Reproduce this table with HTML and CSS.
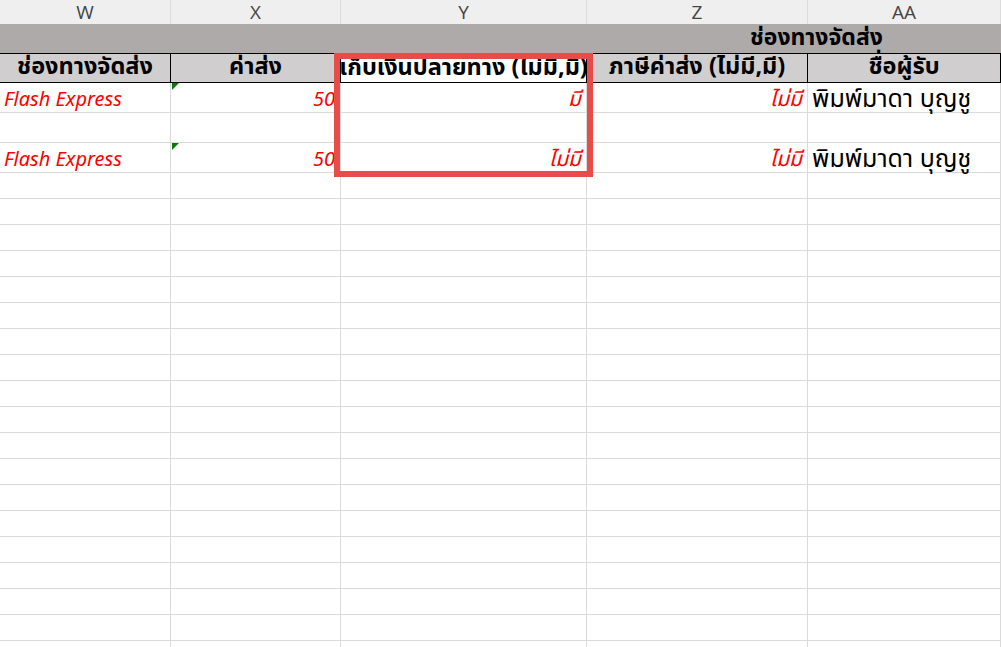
FILE: index.html
```html
<!DOCTYPE html>
<html lang="th">
<head>
    <meta charset="UTF-8">
    <title>Sheet</title>
    <link rel="stylesheet" href="styles.css">
</head>
<body>
    <div class="sheet">
        <div class="row col-heads">
            <div class="cell">W</div>
            <div class="cell">X</div>
            <div class="cell">Y</div>
            <div class="cell">Z</div>
            <div class="cell">AA</div>
        </div>
        <div class="band">
            <span class="band-title">ช่องทางจัดส่ง</span>
        </div>
        <div class="row head-row">
            <div class="cell">ช่องทางจัดส่ง</div>
            <div class="cell">ค่าส่ง</div>
            <div class="cell cell-white">เก็บเงินปลายทาง (ไม่มี,มี)</div>
            <div class="cell">ภาษีค่าส่ง (ไม่มี,มี)</div>
            <div class="cell">ชื่อผู้รับ</div>
        </div>
        <div class="row data-row">
            <div class="cell red latin">Flash Express</div>
            <div class="cell red latin num flagged">50</div>
            <div class="cell red num">มี</div>
            <div class="cell red num">ไม่มี</div>
            <div class="cell name">พิมพ์มาดา บุญชู</div>
        </div>
        <div class="row data-row">
            <div class="cell"></div>
            <div class="cell"></div>
            <div class="cell"></div>
            <div class="cell"></div>
            <div class="cell"></div>
        </div>
        <div class="row data-row">
            <div class="cell red latin">Flash Express</div>
            <div class="cell red latin num flagged">50</div>
            <div class="cell red num">ไม่มี</div>
            <div class="cell red num">ไม่มี</div>
            <div class="cell name">พิมพ์มาดา บุญชู</div>
        </div>
        <div class="empty-rows" id="empty-rows"></div>
        <div class="highlight"></div>
    </div>
    <script src="script.js"></script>
</body>
</html>
```

FILE: styles.css
```css
body {
    margin: 0;
    background-color: #ffffff;
    overflow: hidden;
}

.sheet {
    position: relative;
    width: 1001px;
    height: 647px;
    overflow: hidden;
    font-family: Tahoma, "Noto Sans Thai", "Leelawadee UI", "DejaVu Sans", sans-serif;
}

.row {
    display: grid;
    grid-template-columns: 171px 170px 246px 221px 193px;
    grid-template-rows: minmax(0, 1fr);
}

.cell {
    box-sizing: border-box;
    border-right: 1px solid #dadada;
    border-bottom: 1px solid #dadada;
    white-space: nowrap;
    line-height: 1;
    min-height: 0;
}

/* column letters */
.col-heads {
    height: 24px;
    background-color: #efefef;
}

.col-heads .cell {
    display: flex;
    align-items: center;
    justify-content: center;
    font-family: "Open Sans", "Noto Sans", sans-serif;
    font-size: 19px;
    color: #444444;
    border-right-color: #dcdcdc;
    border-bottom: none;
}

.band {
    height: 29px;
    background-color: #aeaaaa;
    box-sizing: border-box;
    padding-left: 750px;
    display: flex;
    align-items: center;
}

.band-title {
    font-size: 23px;
    font-weight: bold;
    color: #000000;
    line-height: 1;
}

.head-row {
    height: 30px;
    border-top: 1px solid #000000;
    border-bottom: 1px solid #000000;
    box-sizing: border-box;
}

.head-row .cell {
    display: flex;
    align-items: center;
    justify-content: center;
    background-color: #d0cece;
    border-right: 1px solid #000000;
    border-bottom: none;
    font-size: 23.5px;
    font-weight: bold;
    color: #000000;
}

.head-row .cell-white {
    background-color: #ffffff;
    padding-top: 2px;
}

.data-row {
    height: 30px;
}

.data-row .cell {
    display: flex;
    align-items: center;
    padding: 3px 4px 0;
    font-size: 21px;
    position: relative;
}

.red {
    color: #ff0000;
    font-style: italic;
}

.data-row .latin {
    font-family: "Noto Sans", "Open Sans", sans-serif;
    font-size: 20px;
}

.num {
    justify-content: flex-end;
}

.data-row .num {
    padding-right: 5px;
}

.data-row .name {
    font-size: 25px;
    color: #000000;
}

.flagged::before {
    content: "";
    position: absolute;
    left: 1px;
    top: 0;
    border-top: 7px solid #0b7a0b;
    border-right: 7px solid transparent;
}

.empty-rows .row {
    height: 26px;
}

.highlight {
    position: absolute;
    left: 334px;
    top: 53px;
    width: 259px;
    height: 124px;
    box-sizing: border-box;
    border: 6px solid #e84c4a;
}
```

FILE: script.js
```js
var holder = document.getElementById('empty-rows');

for (var i = 0; i < 19; i++) {
    var row = document.createElement('div');
    row.className = 'row';
    for (var c = 0; c < 5; c++) {
        var cell = document.createElement('div');
        cell.className = 'cell';
        row.appendChild(cell);
    }
    holder.appendChild(row);
}
```
